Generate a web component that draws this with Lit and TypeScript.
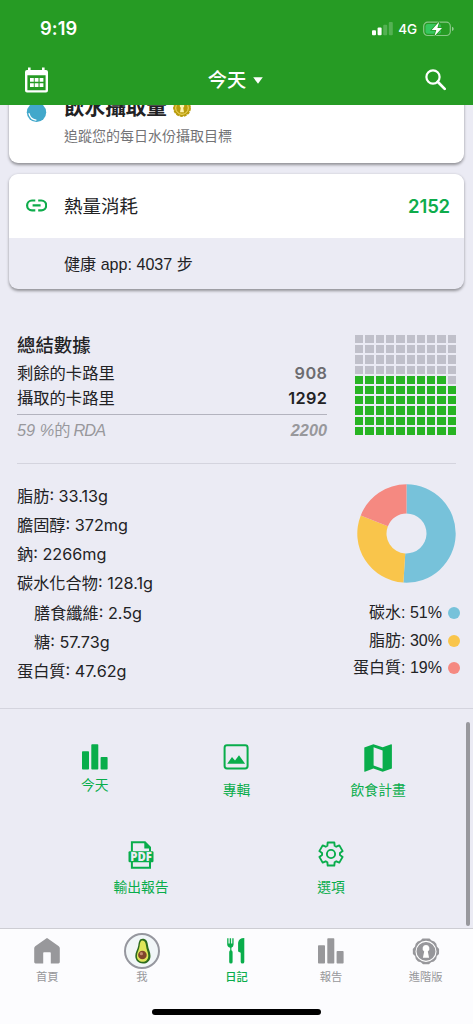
import { LitElement, html, svg, css } from "lit";
import { customElement } from "lit/decorators.js";

const FILLED_CELLS = 59;

const facts = [
  { label: "脂肪", value: "33.13g" },
  { label: "膽固醇", value: "372mg" },
  { label: "鈉", value: "2266mg" },
  { label: "碳水化合物", value: "128.1g" },
  { label: "膳食纖維", value: "2.5g", nested: true },
  { label: "糖", value: "57.73g", nested: true },
  { label: "蛋白質", value: "47.62g" },
];

const macros = [
  { label: "碳水", percent: 51, color: "#77c2da" },
  { label: "脂肪", percent: 30, color: "#f9c54b" },
  { label: "蛋白質", percent: 19, color: "#f58981" },
];

const barsIcon = html`<svg width="26" height="26" viewBox="0 0 26 26" fill="currentColor">
  <rect x="0" y="7.2" width="7" height="18.4" rx="0.8"></rect>
  <rect x="9.3" y="0.2" width="7" height="25.4" rx="0.8"></rect>
  <rect x="18.6" y="13" width="7" height="12.6" rx="0.8"></rect>
</svg>`;

const albumIcon = html`<svg width="26" height="26" viewBox="0 0 26 26">
  <rect x="1.6" y="1.3" width="23" height="23.2" rx="2.4" fill="none" stroke="currentColor" stroke-width="2"></rect>
  <path d="M4.2 19.8 9 12.9l3 3.7 4-5.4 6.1 8.6z" fill="currentColor"></path>
</svg>`;

const mapIcon = html`<svg width="28" height="28" viewBox="0 0 28 28" fill="currentColor">
  <path fill-rule="evenodd" d="M.3 3.4 9.4.2l9.3 3.1L27.2.2q.7-.1.7.7v23.6l-9.2 3.3-9.3-3.2L.9 27.8q-.6.1-.6-.6zM9.6 3.3v18.3l9 3.2V6.5z"></path>
</svg>`;

const pdfIcon = html`<svg width="26" height="28" viewBox="0 0 26 28">
  <path d="M3.900 10V1.200h13l5.100 5.200V10M3.900 21v5.800H22V21" fill="none" stroke="currentColor" stroke-width="2"></path>
  <path d="M16.300 1v6.500H23z" fill="currentColor"></path>
  <rect x="0.500" y="10.300" width="25" height="11" rx="1.200" fill="currentColor"></rect>
  <text class="pdf" x="13" y="20" text-anchor="middle" textLength="21.500" lengthAdjust="spacingAndGlyphs">PDF</text>
</svg>`;

function gearOutline() {
  const points: string[] = [];
  for (let tooth = 0; tooth < 6; tooth++) {
    for (const [offset, radius] of [[-24, 9], [-16, 12], [16, 12], [24, 9]]) {
      const a = ((tooth * 60 + offset) * Math.PI) / 180;
      points.push(`${(13 + radius * Math.sin(a)).toFixed(2)},${(13 - radius * Math.cos(a)).toFixed(2)}`);
    }
  }
  return points.join(" ");
}

const gearIcon = html`<svg width="26" height="26" viewBox="0 0 26 26" fill="none" stroke="currentColor" stroke-width="1.900" stroke-linejoin="round">
  <polygon points=${gearOutline()}></polygon>
  <circle cx="13" cy="13" r="4.100"></circle>
</svg>`;

const homeIcon = html`<svg width="26" height="26" viewBox="0 0 26 26" fill="currentColor">
  <path d="M12.200.4q.8-.6 1.600 0l11 7.800q1 .8 1 2V24q0 1.400-1.400 1.400h-7.600V15q0-.8-.8-.8h-6q-.8 0-.8.8v10.400H1.600Q.2 25.400.2 24V10.200q0-1.200 1-2z"></path>
</svg>`;

const avocadoIcon = html`<svg width="36" height="36" viewBox="0 0 36 36">
  <circle cx="18" cy="18" r="17" fill="#f1f6f8" stroke="#96979f" stroke-width="2"></circle>
  <path d="M18.600 5.800c3.600 0 5 2.500 5.400 6.800.3 3.600 2.500 6.400 2.500 10.300 0 4.700-3.300 7.700-7.500 7.700s-7.700-2.900-7.700-7.500c0-4 2.400-6.600 3-10.500.6-4 1-6.800 4.300-6.800z" fill="#2c6b1d"></path>
  <path d="M18.500 7.400c2.300 0 3.200 2.200 3.500 5.300.4 3.900 2.300 6.500 2.300 10 0 3.800-2.500 6.100-5.600 6.100s-5.800-2.200-5.800-5.900c0-3.400 2.200-6 2.700-9.900.4-3.300.8-5.600 2.900-5.600z" fill="#dfe65a"></path>
  <circle cx="18.400" cy="22" r="4.300" fill="#80462b"></circle>
  <circle cx="17.400" cy="20.700" r="1.600" fill="#c18a6d"></circle>
</svg>`;

const cutleryIcon = html`<svg width="20" height="26" viewBox="0 0 20 26" fill="currentColor">
  <path d="M1.200.2h1.300v5.200h1.200V.2h1.400v5.200h1.200V.2h1.300v6.300q0 2.400-2.200 3.200v2.600q1.200.6 1.200 2v9.800q0 1.500-1.700 1.500t-1.700-1.500v-9.800q0-1.400 1-2V9.700Q1.200 8.900 1.200 6.500z"></path>
  <path d="M12.100 4.800Q12.600.2 18.300.1V24q0 1.600-1.800 1.600T14.700 24v-9.300l-2.600-1.200z"></path>
</svg>`;

const premiumIcon = html`<svg width="28" height="27" viewBox="0 0 28 27">
  <path d="M10.500.6h7l2 1.900 2.800.9 2 2.400.6 2.800 2.200 2.300-.1 5-2.200 2.200-.6 3-2.300 2.300-2.900.8-2 2.100h-6l-2.100-2.100-2.900-.8-2.200-2.300-.7-3-2.200-2.200-.1-5 2.200-2.300.7-2.800 2-2.400 2.800-.9z" fill="#97979b"></path>
  <circle cx="14" cy="13.400" r="10" fill="none" stroke="#fff" stroke-width="1.100"></circle>
  <path d="M14 7.100a3.400 3.400 0 0 1 1.800 6.300l1.300 6.400h-6.200l1.300-6.400A3.400 3.400 0 0 1 14 7.100z" fill="#fff"></path>
</svg>`;

const firstActions = [
  { label: "今天", icon: barsIcon },
  { label: "專輯", icon: albumIcon },
  { label: "飲食計畫", icon: mapIcon },
];

const secondActions = [
  { label: "輸出報告", icon: pdfIcon },
  { label: "選項", icon: gearIcon },
];

const tabs = [
  { label: "首頁", icon: homeIcon },
  { label: "我", icon: avocadoIcon },
  { label: "日記", icon: cutleryIcon, active: true },
  { label: "報告", icon: barsIcon },
  { label: "進階版", icon: premiumIcon },
];

function donutSlices() {
  const c = 49.5;
  const outer = 49.2;
  const inner = 20;
  let start = 0;
  return macros.map((m) => {
    const end = start + (m.percent / 100) * Math.PI * 2;
    const pt = (a: number, r: number) => `${c + r * Math.sin(a)} ${c - r * Math.cos(a)}`;
    const large = end - start > Math.PI ? 1 : 0;
    const d = `M${pt(start, outer)}A${outer} ${outer} 0 ${large} 1 ${pt(end, outer)}L${pt(end, inner)}A${inner} ${inner} 0 ${large} 0 ${pt(start, inner)}Z`;
    start = end;
    return svg`<path d=${d} fill=${m.color}></path>`;
  });
}

@customElement("app-root")
export class AppRoot extends LitElement {
  static styles = css`
    :host {
      display: flex;
      flex-direction: column;
      position: relative;
      width: 473px;
      height: 1024px;
      overflow: hidden;
      background: #ebebf4;
      color: #222224;
      font-family: Inter, "Noto Sans CJK TC", sans-serif;
      font-size: 16px;
    }
    * { box-sizing: border-box; }
    svg { display: block; flex: none; }
    .top { height: 105px; flex: none; background: #269b24; color: #fff; }
    .status { height: 56px; display: flex; align-items: center; padding: 1px 19px 0 40px; }
    .time { font-size: 18.300px; font-weight: 600; letter-spacing: 0.1px; flex: 1; margin-top: -1px; }
    .net { font-size: 13.500px; font-weight: 500; letter-spacing: -0.1px; margin: 0 6px 0 5px; }
    .nav { height: 49px; display: grid; grid-template-columns: 1fr auto 1fr; align-items: center; padding: 0 27px 0 24px; }
    .nav .find { justify-self: end; margin-top: -2px; }
    .day { display: flex; align-items: center; gap: 7px; height: 26px; line-height: 26px; margin-top: -1px; padding-left: 1px; font-size: 19.300px; font-weight: 500; }
    .day svg { margin-top: 1px; }
    .main { height: 823px; flex: none; overflow: hidden; }
    .card { margin: 0 9px; border-radius: 9px; background: #fff; box-shadow: 0 1.500px 3px rgba(0, 0, 0, 0.38); overflow: hidden; }
    .water { height: 78px; margin-top: -20px; display: flex; padding: 10px 0 0 17px; }
    .water .drop { margin-top: 7px; }
    .water-body { margin-left: 17px; }
    .water-title { display: flex; align-items: center; gap: 6px; height: 25px; line-height: 25px; font-size: 20.600px; font-weight: 700; white-space: nowrap; }
    .water-sub { height: 20px; line-height: 20px; margin-top: 6px; font-size: 14px; color: #737376; }
    .burn { height: 115px; margin-top: 11px; background: #ebebf4; }
    .burn-head { height: 64px; background: #fff; display: flex; align-items: center; padding: 0 14px 2px 17px; }
    .burn-title { flex: 1; margin-left: 17px; font-size: 18.500px; }
    .burn-value { font-size: 18.500px; font-weight: 600; color: #0eac4b; letter-spacing: -0.150px; padding-top: 1px; }
    .burn-sub { height: 51px; line-height: 53px; padding-left: 55px; font-family: "Liberation Sans", "Noto Sans CJK TC", sans-serif; font-size: 16.100px; }
    .summary { margin: 44px 17px 0; height: 131px; display: flex; justify-content: space-between; border-bottom: 1px solid #d4d4de; }
    .totals { width: 310px; }
    .totals-title { font-size: 18.400px; font-weight: 500; height: 25px; line-height: 24px; }
    .row { display: flex; justify-content: space-between; height: 25px; line-height: 25px; font-size: 16.300px; white-space: nowrap; }
    .row:nth-child(2) { margin-top: 3px; }
    .row b { font-weight: 600; letter-spacing: 0.400px; margin-right: -0.400px; }
    .left b { color: #6c6c70; }
    .rda { border-top: 1px solid #b3b3be; margin-top: 3px; height: 33px; line-height: 31px; color: #98989c; }
    .rda i { font-family: "Liberation Sans", sans-serif; }
    .rda .unit { margin-left: 3px; letter-spacing: -0.900px; }
    .row.rda b { font-family: "Liberation Sans", sans-serif; font-weight: 700; font-style: italic; letter-spacing: 0; margin: 0; }
    .waffle { display: grid; grid-template-columns: repeat(10, 8.300px); grid-auto-rows: 8.200px; column-gap: 2px; row-gap: 2px; height: 101px; margin-top: 2px; }
    .cell { background: #c0c0ca; }
    .cell.on { background: #27b422; }
    .nutrients { display: flex; justify-content: space-between; height: 245px; padding: 17px 13px 0 17px; border-bottom: 1px solid #d4d4de; }
    .fact { height: 29.150px; line-height: 30px; font-size: 16.200px; letter-spacing: 0; }
    .fact.nested { padding-left: 17px; }
    .macros { display: flex; flex-direction: column; align-items: flex-end; }
    .donut { margin: 3px 4.300px 17px 0; }
    .legend { display: flex; align-items: center; gap: 6px; height: 27.500px; padding-bottom: 1px; font-size: 16px; font-family: "Liberation Sans", "Noto Sans CJK TC", sans-serif; }
    .legend span { line-height: 24px; }
    .dot { width: 12px; height: 12px; border-radius: 50%; }
    .actions { display: grid; color: #09ad4b; font-size: 13.800px; }
    .actions.one { grid-template-columns: repeat(3, 1fr); padding: 34.500px 24px 0 24px; height: 132px; }
    .actions.two { grid-template-columns: repeat(2, 1fr); padding: 0 47px 0 46px; }
    .action { display: flex; flex-direction: column; align-items: center; }
    .action .glyph { height: 28px; }
    .action span { line-height: 20px; margin-top: 8px; }
    .action.tight span { margin-top: 3px; }
    .pdf { font: 800 12px "Open Sans", sans-serif; fill: #ebebf4; }
    .tabs { height: 96px; flex: none; display: grid; grid-template-columns: repeat(5, 1fr); border-top: 1px solid #cdcdd3; background: #fcfcfe; color: #98989b; }
    .tab { display: flex; flex-direction: column; align-items: center; font-size: 11.300px; }
    .tab .glyph { height: 40px; display: flex; align-items: center; margin-top: 2px; }
    .tab span { line-height: 14px; margin-top: -1px; }
    .tab.active { color: #09ad4b; font-weight: 500; }
    .scroll { position: absolute; right: 3px; top: 722px; width: 4px; height: 204px; border-radius: 2px; background: #98989d; }
    .grip { position: absolute; left: 152px; bottom: 9px; width: 169px; height: 6px; border-radius: 3px; background: #000; }
  `;

  renderAction(a: { label: string; icon: unknown }, tight = false) {
    return html`<div class="action ${tight ? "tight" : ""}"><div class="glyph">${a.icon}</div><span>${a.label}</span></div>`;
  }

  render() {
    return html`
      <header class="top">
        <div class="status">
          <div class="time">9:19</div>
          <svg width="22" height="14" viewBox="0 0 22 14" fill="#fff">
            <rect x="1" y="8.300" width="4" height="5" rx="1"></rect>
            <rect x="6.600" y="5.500" width="4" height="7.800" rx="1"></rect>
            <rect x="12.200" y="2.800" width="4" height="10.500" rx="1" opacity="0.220"></rect>
            <rect x="17.800" y="0" width="4" height="13.300" rx="1" opacity="0.220"></rect>
          </svg>
          <div class="net">4G</div>
          <svg width="31" height="16" viewBox="0 0 31 16">
            <rect x="0.700" y="1.200" width="26.600" height="13.300" rx="4" fill="none" stroke="#fff" stroke-opacity="0.450" stroke-width="1.200"></rect>
            <rect x="2.500" y="3" width="15.500" height="9.700" rx="2.200" fill="#36c75e"></rect>
            <path d="M29 5.700q1.700.600 1.700 2.200T29 10.100z" fill="#fff" opacity="0.500"></path>
            <path d="M16.200.8 8.700 9h4.600l-1.900 6.200L19 6.900h-4.600z" fill="#fff" stroke="#269b24" stroke-width="1.600" paint-order="stroke"></path>
          </svg>
        </div>
        <div class="nav">
          <svg width="25" height="27" viewBox="0 0 25 27" fill="#fff">
            <path fill-rule="evenodd" d="M4 .5h2.600V3H18V.5h2.600V3h1.400q2 0 2 2v18.600q0 2-2 2H3q-2 0-2-2V5q0-2 2-2h1zM3.400 8.200v15h18.200v-15z"></path>
            <path d="M6 11h3.800v3.800H6zM10.700 11h3.800v3.800h-3.800zM15.600 11h3.800v3.800h-3.800zM6 16.300h3.800V20H6zM10.700 16.300h3.800V20h-3.800zM15.600 16.300h3.800V20h-3.800z"></path>
          </svg>
          <div class="day">今天
            <svg width="10" height="7" viewBox="0 0 10 7"><path d="M.2.300h9.600L5 6.800z" fill="#fff"></path></svg>
          </div>
          <svg class="find" width="21" height="22" viewBox="0 0 21 22" fill="none" stroke="#fff">
            <circle cx="8" cy="8" r="6.600" stroke-width="2.200"></circle>
            <path d="m12.700 12.700 7 7.200" stroke-width="2.700" stroke-linecap="round"></path>
          </svg>
        </div>
      </header>

      <main class="main">
        <section class="card water">
          <svg class="drop" width="21" height="21" viewBox="0 0 21 21">
            <circle cx="10.500" cy="10.300" r="9.700" fill="#42a8cb"></circle>
            <path d="M3 11.500q1.300 5.600 7 6.700" fill="none" stroke="#fff" stroke-width="1.200" stroke-linecap="round"></path>
          </svg>
          <div class="water-body">
            <div class="water-title">飲水攝取量
              <svg width="18" height="18" viewBox="0 0 18 18">
                <circle cx="9" cy="9" r="8.200" fill="#b99c0c" stroke="#b99c0c" stroke-width="1.400" stroke-dasharray="3 1"></circle>
                <circle cx="9" cy="9" r="6.300" fill="none" stroke="#f3dc6b" stroke-width="1"></circle>
                <path d="M9 4.500a2.300 2.300 0 0 1 1.200 4.200l.8 4.500H7l.8-4.500A2.300 2.300 0 0 1 9 4.500z" fill="#fff3b0"></path>
              </svg>
            </div>
            <div class="water-sub">追蹤您的每日水份攝取目標</div>
          </div>
        </section>

        <section class="card burn">
          <div class="burn-head">
            <svg width="21" height="13" viewBox="0 0 21 13" fill="none" stroke="#0eac4b" stroke-width="2.200">
              <path d="M9.300 1.500H6a4.900 4.900 0 0 0 0 9.800h3.300M12.200 1.500h3.100a4.900 4.900 0 0 1 0 9.800h-3.100M6.600 6.400h8"></path>
            </svg>
            <div class="burn-title">熱量消耗</div>
            <div class="burn-value">2152</div>
          </div>
          <div class="burn-sub">健康 app: 4037 步</div>
        </section>

        <section class="summary">
          <div class="totals">
            <div class="totals-title">總結數據</div>
            <div class="row left"><span>剩餘的卡路里</span><b>908</b></div>
            <div class="row"><span>攝取的卡路里</span><b>1292</b></div>
            <div class="row rda"><span><i>59 %</i>的<i class="unit">RDA</i></span><b>2200</b></div>
          </div>
          <div class="waffle">
            ${Array.from({ length: 100 }, (_, i) => {
              const rank = (9 - Math.floor(i / 10)) * 10 + (i % 10);
              return html`<div class="cell ${rank < FILLED_CELLS ? "on" : ""}"></div>`;
            })}
          </div>
        </section>

        <section class="nutrients">
          <div>
            ${facts.map((f) => html`<div class="fact ${f.nested ? "nested" : ""}">${f.label}: ${f.value}</div>`)}
          </div>
          <div class="macros">
            <svg class="donut" width="99" height="99" viewBox="0 0 99 99">${donutSlices()}</svg>
            ${macros.map(
              (m) => html`<div class="legend"><span>${m.label}: ${m.percent}%</span><div class="dot" style="background:${m.color}"></div></div>`
            )}
          </div>
        </section>

        <section class="actions one">${firstActions.map((a, i) => this.renderAction(a, i === 0))}</section>
        <section class="actions two">${secondActions.map((a) => this.renderAction(a))}</section>
      </main>

      <nav class="tabs">
        ${tabs.map(
          (t) => html`<div class="tab ${t.active ? "active" : ""}"><div class="glyph">${t.icon}</div><span>${t.label}</span></div>`
        )}
      </nav>
      <div class="scroll"></div>
      <div class="grip"></div>
    `;
  }
}
